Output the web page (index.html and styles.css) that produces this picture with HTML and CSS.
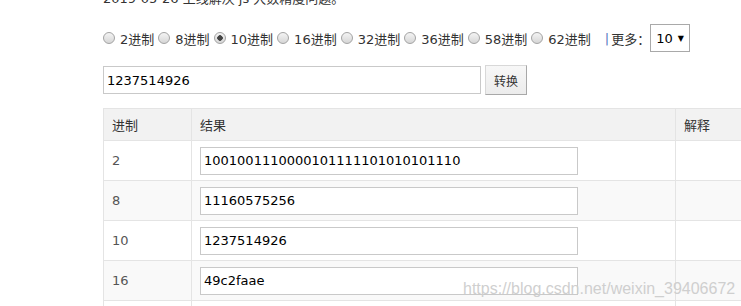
FILE: index.html
```html
<!DOCTYPE html>
<html lang="zh-CN">
<head>
  <meta charset="UTF-8">
  <meta name="viewport" content="width=device-width, initial-scale=1.0">
  <title>进制转换</title>
  <link rel="stylesheet" href="styles.css">
</head>
<body>
  <div class="page">
    <p class="note">2019-05-26 上线解决 js 大数精度问题。</p>
    <div class="bases">
      <label class="base"><input type="radio" name="base">2进制</label>
      <label class="base"><input type="radio" name="base">8进制</label>
      <label class="base"><input type="radio" name="base" checked>10进制</label>
      <label class="base"><input type="radio" name="base">16进制</label>
      <label class="base"><input type="radio" name="base">32进制</label>
      <label class="base"><input type="radio" name="base">36进制</label>
      <label class="base"><input type="radio" name="base">58进制</label>
      <label class="base"><input type="radio" name="base">62进制</label>
      <span class="sep">|</span><span class="more">更多：</span>
      <div class="select">10<span class="caret">▼</span></div>
    </div>
    <div class="convert">
      <input class="num" type="text" value="1237514926">
      <button class="go">转换</button>
    </div>
    <table class="result">
      <tr><th class="c-base">进制</th><th class="c-val">结果</th><th>解释</th></tr>
      <tr><td>2</td><td><input class="out" type="text" value="1001001110000101111101010101110"></td><td></td></tr>
      <tr><td>8</td><td><input class="out" type="text" value="11160575256"></td><td></td></tr>
      <tr><td>10</td><td><input class="out" type="text" value="1237514926"></td><td></td></tr>
      <tr><td>16</td><td><input class="out" type="text" value="49c2faae"></td><td></td></tr>
      <tr><td>32</td><td><input class="out" type="text" value="14s5tlm"></td><td></td></tr>
    </table>
    <div class="watermark">https://blog.csdn.net/weixin_39406672</div>
  </div>
</body>
</html>
```

FILE: styles.css
```css
html, body {
  margin: 0;
  padding: 0;
  overflow: hidden;
  background: #fff;
}
body {
  font-family: "DejaVu Sans", "Noto Sans CJK SC", sans-serif;
  font-size: 13px;
  color: #333;
}
.page {
  display: flow-root;
  position: relative;
  padding-left: 103px;
  width: 700px;
}
.note {
  margin: -11px 0 0;
  line-height: 20px;
  color: #333;
}
.bases {
  display: flex;
  align-items: center;
  height: 28px;
  margin-top: 15px;
  white-space: nowrap;
}
.base {
  display: inline-flex;
  align-items: center;
  margin-right: 4px;
  color: #333;
}
.base input {
  appearance: none;
  -webkit-appearance: none;
  width: 12px;
  height: 12px;
  margin: 0 5px 0 0;
  border: 1px solid #a3a3a3;
  border-radius: 50%;
  background: linear-gradient(#f4f4f4, #d6d6d6);
  box-sizing: border-box;
}
.base input:checked {
  background: radial-gradient(circle, #444 0 2.5px, transparent 3px), linear-gradient(#f4f4f4, #d6d6d6);
}
.sep {
  color: #5a78c0;
  margin: 0 2px 0 10px;
}
.more {
  font-family: "Noto Sans CJK SC", sans-serif;
  color: #333;
}
.select {
  display: flex;
  align-items: center;
  box-sizing: border-box;
  width: 40px;
  height: 28px;
  padding-left: 5px;
  border: 1px solid #a9a9a9;
  color: #000;
}
.caret {
  font-size: 8px;
  margin-left: 5px;
}
.convert {
  display: flex;
  align-items: center;
  height: 30px;
  margin-top: 13px;
}
.num {
  box-sizing: border-box;
  width: 378px;
  height: 28px;
  padding: 0 3px;
  border: 1px solid #c9c9c9;
  font-family: inherit;
  font-size: 13px;
  color: #000;
  outline: none;
}
.go {
  box-sizing: border-box;
  height: 30px;
  width: 42px;
  margin-left: 4px;
  padding: 0;
  border: 1px solid #d8d8d8;
  border-right-color: #a8a8a8;
  border-bottom-color: #a8a8a8;
  background: linear-gradient(#f7f7f7, #ececec);
  font-family: inherit;
  font-size: 12px;
  color: #333;
}
.result {
  margin-top: 13px;
  width: 700px;
  border-collapse: collapse;
  table-layout: fixed;
}
.result th, .result td {
  border: 1px solid #e4e4e4;
  padding: 0 8px;
  text-align: left;
}
.result th {
  height: 31px;
  background: #f2f2f2;
  font-weight: normal;
  color: #333;
}
.result td {
  height: 39px;
  color: #555;
}
.result tr:nth-child(odd) td {
  background: #f9f9f9;
}
.c-base {
  width: 71px;
}
.c-val {
  width: 467px;
}
.out {
  box-sizing: border-box;
  width: 378px;
  height: 28px;
  padding: 0 3px;
  border: 1px solid #c9c9c9;
  font-family: inherit;
  font-size: 13px;
  color: #000;
  vertical-align: middle;
  outline: none;
}
.watermark {
  position: absolute;
  left: 463px;
  top: 280px;
  font-family: "Liberation Sans", sans-serif;
  font-size: 16px;
  color: #cfcfcf;
  white-space: nowrap;
}
```
